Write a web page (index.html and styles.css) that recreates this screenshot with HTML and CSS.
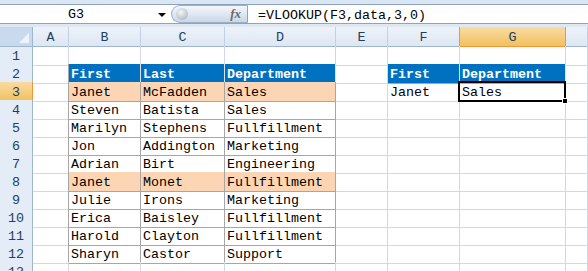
FILE: index.html
```html
<!DOCTYPE html>
<html lang="en">
<head>
  <meta charset="UTF-8">
  <title>VLOOKUP sheet</title>
  <link rel="stylesheet" href="styles.css">
</head>
<body>

  <!-- Formula bar -->
  <div class="toolbar">
    <div class="formula-row">
      <div class="name-box">
        <span class="name">G3</span>
        <span class="drop"></span>
      </div>
      <div class="fx-pill">
        <span class="knob"></span>
        <span class="fx">fx</span>
      </div>
      <div class="formula">=VLOOKUP(F3,data,3,0)</div>
    </div>
    <div class="gap"></div>
  </div>

  <!-- Sheet -->
  <div class="sheet">
    <div class="row head">
      <div class="corner"><span class="tri"></span></div>
      <div class="ch">A</div><div class="ch">B</div><div class="ch">C</div><div class="ch">D</div>
      <div class="ch">E</div><div class="ch">F</div><div class="ch sel">G</div><div class="ch"></div>
    </div>

    <div class="row">
      <div class="rh">1</div>
      <div class="c"></div><div class="c"></div><div class="c"></div><div class="c"></div>
      <div class="c"></div><div class="c"></div><div class="c"></div><div class="c"></div>
    </div>

    <div class="row">
      <div class="rh">2</div>
      <div class="c edge"></div>
      <div class="c th">First</div><div class="c th">Last</div><div class="c th">Department</div>
      <div class="c"></div>
      <div class="c th">First</div><div class="c th under">Department</div><div class="c"></div>
    </div>

    <div class="row">
      <div class="rh sel">3</div>
      <div class="c edge"></div>
      <div class="c t hi">Janet</div><div class="c t hi">McFadden</div><div class="c t hi">Sales</div>
      <div class="c"></div>
      <div class="c">Janet</div><div class="c active">Sales<span class="handle"></span></div><div class="c"></div>
    </div>

    <div class="row">
      <div class="rh">4</div>
      <div class="c edge"></div>
      <div class="c t">Steven</div><div class="c t">Batista</div><div class="c t">Sales</div>
      <div class="c"></div><div class="c"></div><div class="c"></div><div class="c"></div>
    </div>

    <div class="row">
      <div class="rh">5</div>
      <div class="c edge"></div>
      <div class="c t">Marilyn</div><div class="c t">Stephens</div><div class="c t">Fullfillment</div>
      <div class="c"></div><div class="c"></div><div class="c"></div><div class="c"></div>
    </div>

    <div class="row">
      <div class="rh">6</div>
      <div class="c edge"></div>
      <div class="c t">Jon</div><div class="c t">Addington</div><div class="c t">Marketing</div>
      <div class="c"></div><div class="c"></div><div class="c"></div><div class="c"></div>
    </div>

    <div class="row">
      <div class="rh">7</div>
      <div class="c edge"></div>
      <div class="c t">Adrian</div><div class="c t">Birt</div><div class="c t">Engineering</div>
      <div class="c"></div><div class="c"></div><div class="c"></div><div class="c"></div>
    </div>

    <div class="row">
      <div class="rh">8</div>
      <div class="c edge"></div>
      <div class="c t hi">Janet</div><div class="c t hi">Monet</div><div class="c t hi">Fullfillment</div>
      <div class="c"></div><div class="c"></div><div class="c"></div><div class="c"></div>
    </div>

    <div class="row">
      <div class="rh">9</div>
      <div class="c edge"></div>
      <div class="c t">Julie</div><div class="c t">Irons</div><div class="c t">Marketing</div>
      <div class="c"></div><div class="c"></div><div class="c"></div><div class="c"></div>
    </div>

    <div class="row">
      <div class="rh">10</div>
      <div class="c edge"></div>
      <div class="c t">Erica</div><div class="c t">Baisley</div><div class="c t">Fullfillment</div>
      <div class="c"></div><div class="c"></div><div class="c"></div><div class="c"></div>
    </div>

    <div class="row">
      <div class="rh">11</div>
      <div class="c edge"></div>
      <div class="c t">Harold</div><div class="c t">Clayton</div><div class="c t">Fullfillment</div>
      <div class="c"></div><div class="c"></div><div class="c"></div><div class="c"></div>
    </div>

    <div class="row">
      <div class="rh">12</div>
      <div class="c edge"></div>
      <div class="c t">Sharyn</div><div class="c t">Castor</div><div class="c t">Support</div>
      <div class="c"></div><div class="c"></div><div class="c"></div><div class="c"></div>
    </div>

    <div class="row">
      <div class="rh">13</div>
      <div class="c"></div><div class="c"></div><div class="c"></div><div class="c"></div>
      <div class="c"></div><div class="c"></div><div class="c"></div><div class="c"></div>
    </div>
  </div>

</body>
</html>
```

FILE: styles.css
```css
* {
  box-sizing: border-box;
}

body {
  margin: 0;
  background: #fff;
  font-family: "Liberation Mono", "DejaVu Sans Mono", monospace;
  font-size: 13.33px;
  color: #000;
  overflow: hidden;
}

/* formula bar */
.toolbar {
  border-top: 4px solid #dbe6f4;
}

.formula-row {
  display: flex;
  height: 20px;
  border-top: 1px solid #8ea3bf;
  border-bottom: 1px solid #8ea3bf;
  background: #fff;
}

.name-box {
  width: 171px;
  display: flex;
  align-items: center;
}

.name {
  width: 152px;
  text-align: center;
  line-height: 18px;
  padding-top: 2px;
}

.drop {
  width: 0;
  height: 0;
  border-left: 4px solid transparent;
  border-right: 4px solid transparent;
  border-top: 4px solid #000;
  margin-left: 6px;
  margin-top: 2px;
}

.fx-pill {
  width: 77px;
  height: 18px;
  display: flex;
  align-items: center;
  justify-content: space-between;
  padding: 0 6px 0 4px;
  border: 1px solid #9db0c8;
  border-right-color: #8ea3bf;
  border-radius: 9px 0 0 9px;
  background: linear-gradient(#f4f7fb, #dde6f1 55%, #cad7e7);
}

.knob {
  width: 12px;
  height: 12px;
  border-radius: 50%;
  background: radial-gradient(circle at 40% 35%, #f4f6f8, #b9c2cc 70%, #9aa5b1);
}

.fx {
  font-family: "Liberation Serif", serif;
  font-style: italic;
  font-weight: bold;
  font-size: 13px;
  color: #6b6b6b;
}

.formula {
  padding-left: 10px;
  padding-top: 2px;
  line-height: 18px;
}

.gap {
  height: 3px;
  background: #dfe7f1;
}

/* sheet grid */
.row {
  display: grid;
  grid-template-columns: 33px 36px 72px 84px 111px 52px 72px 106px 1fr;
  height: 18px;
}

.row.head {
  height: 19px;
}

.c, .ch, .rh, .corner {
  border-right: 1px solid #d0d7e5;
  border-bottom: 1px solid #d0d7e5;
  line-height: 17px;
  padding-top: 2px;
  white-space: nowrap;
  overflow: visible;
}

.c {
  padding-left: 2px;
}

.ch, .rh {
  text-align: center;
  color: #243e5f;
  background: linear-gradient(#eef3fa, #dde6f2);
  border-right-color: #9eb6ce;
  border-bottom-color: #9eb6ce;
}

.ch {
  line-height: 17px;
  border-right-color: #c3d1e2;
}

.rh {
  background: #e4ecf7;
}

.ch.sel, .rh.sel {
  background: linear-gradient(#f9dba3, #f1c15f);
  border-right-color: #f29536;
  border-bottom-color: #f29536;
}

.ch.sel {
  border-left: 1px solid #f29536;
  margin-left: -1px;
}

.corner {
  position: relative;
  background: #c9daee;
  border-right-color: #9eb6ce;
  border-bottom-color: #9eb6ce;
}

.tri {
  position: absolute;
  right: 3px;
  bottom: 3px;
  width: 0;
  height: 0;
  border-left: 10px solid transparent;
  border-bottom: 10px solid #eef4fb;
}

/* data table */
.edge {
  border-right-color: #a6a6a6;
}

.t {
  border-right-color: #a6a6a6;
  border-bottom-color: #a6a6a6;
}

.th {
  background: #0070c0;
  color: #fff;
  font-weight: bold;
  border-right-color: #dbe3ee;
  border-bottom-color: #a6a6a6;
}

.under {
  border-bottom-color: #f29536;
}

.hi {
  background: #fcd5b4;
}

/* active cell */
.active {
  position: relative;
}

.active::after {
  content: "";
  position: absolute;
  top: -1px;
  left: -2px;
  right: -1px;
  bottom: -1px;
  border: 2px solid #000;
}

.handle {
  position: absolute;
  right: -3px;
  bottom: -3px;
  width: 6px;
  height: 6px;
  background: #000;
  border: 1px solid #fff;
  z-index: 1;
}
```
